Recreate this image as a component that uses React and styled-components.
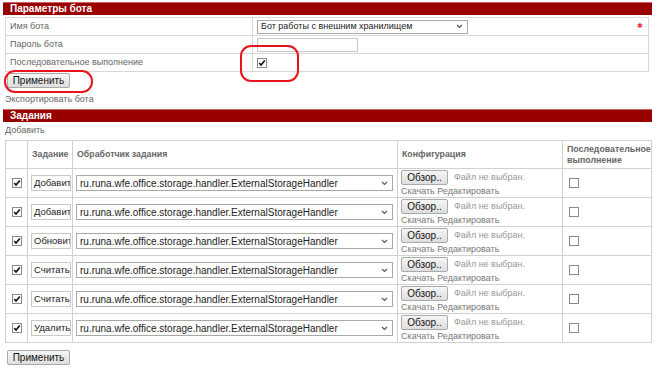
import React from 'react'
import styled, { createGlobalStyle } from 'styled-components'

const Global = createGlobalStyle`
  body {
    margin: 0;
    background: #fff;
    font-family: "Liberation Sans", Arial, sans-serif;
    font-size: 9px;
    color: #666;
  }
`

const Page = styled.div`
  position: relative;
  width: 658px;
  height: 374px;
  padding-top: 2px;
  box-sizing: border-box;
  overflow: hidden;
`

const SectionBar = styled.div`
  margin: ${props => props.top || 0}px 6px 0 3px;
  height: 12px;
  line-height: 12px;
  background: #990000;
  border-top: 1px solid #c86464;
  color: #fff;
  font-weight: bold;
  font-size: 10px;
  padding-left: 7px;
`

const ParamTable = styled.table`
  margin: 2px 0 0 5px;
  width: 644px;
  border-collapse: collapse;
  table-layout: fixed;
  border: 1px solid #d8d8d8;

  tr {
    height: 18px;
  }

  td {
    border-top: 1px solid #d8d8d8;
    padding: 0 0 0 4px;
    vertical-align: middle;
    line-height: 11px;
  }
`

const Col = styled.col`
  width: ${props => props.w}px;
`

const LabelCell = styled.td`
  border-right: 1px solid #d8d8d8;
  color: #666;
`

const ValueCell = styled.td`
  position: relative;
`

const Select = styled.div`
  display: flex;
  align-items: center;
  justify-content: space-between;
  box-sizing: border-box;
  width: ${props => props.w}px;
  height: ${props => props.h || 14}px;
  border: 1px solid #a9a9a9;
  padding: 0 4px 0 3px;
  color: #222;
  font-size: ${props => props.fs || 9}px;
  background: #fff;
  white-space: nowrap;
  overflow: hidden;
`

const Chevron = () => (
  <svg width="7" height="5" viewBox="0 0 7 5">
    <path d="M1 1 L3.5 3.5 L6 1" fill="none" stroke="#555" strokeWidth="1.1" />
  </svg>
)

const TextInput = styled.div`
  box-sizing: border-box;
  width: ${props => props.w}px;
  height: ${props => props.h || 14}px;
  border: 1px solid #c8c8c8;
  padding: 0 1px 0 2px;
  color: #222;
  font-size: ${props => props.fs || 9}px;
  line-height: ${props => (props.h || 14) - 2}px;
  overflow: hidden;
  white-space: nowrap;
`

const Check = styled.span`
  display: inline-flex;
  align-items: center;
  justify-content: center;
  box-sizing: border-box;
  width: 10px;
  height: 10px;
  border: 1px solid #8a8a8a;
  background: #fff;
  vertical-align: middle;
`

const CheckBox = ({ checked }) => (
  <Check>
    {checked && (
      <svg width="8" height="8" viewBox="0 0 8 8">
        <path d="M1.2 4 L3 6 L6.8 1.4" fill="none" stroke="#111" strokeWidth="1.6" />
      </svg>
    )}
  </Check>
)

const Star = styled.span`
  position: absolute;
  right: 5px;
  top: 2px;
  color: #e33;
  font-size: 7px;
`

const Button = styled.div`
  display: inline-flex;
  align-items: center;
  justify-content: center;
  box-sizing: border-box;
  width: ${props => props.w || 63}px;
  height: 15px;
  border: 1px solid #aaa;
  border-radius: 2px;
  background: linear-gradient(#f6f6f6, #dedede);
  color: #111;
  font-size: 10px;
`

const ButtonRow = styled.div`
  margin: ${props => props.top}px 0 0 7px;
  height: 15px;
`

const LinkText = styled.div`
  margin: ${props => props.top}px 0 0 5px;
  color: #666;
  line-height: 11px;
`

const TaskTable = styled.table`
  margin: 4px 0 0 5px;
  width: 647px;
  border-collapse: collapse;
  table-layout: fixed;
  border: 1px solid #d0d0d0;

  thead tr {
    height: 28px;
  }

  tbody tr {
    height: 29px;
  }

  th {
    text-align: left;
    font-weight: bold;
    font-size: 8.8px;
    color: #666;
    padding: 0 3px 0 4px;
    line-height: 11px;
    border: 1px solid #d0d0d0;
  }

  td {
    border: 1px solid #d0d0d0;
    padding: 0 3px;
    vertical-align: middle;
    white-space: nowrap;
  }
`

const CheckCell = styled.td`
  && {
    padding-left: 6px;
  }
`

const Config = styled.div`
  display: flex;
  flex-direction: column;
  gap: 1px;
  color: #777;
  line-height: 11px;
`

const FileLine = styled.div`
  display: flex;
  align-items: center;
  gap: 6px;
  color: #999;
`

const SmallBtn = styled(Button)`
  width: 47px;
  height: 15px;
  font-size: 10px;
`

const Note = styled.div`
  position: absolute;
  left: ${props => props.x}px;
  top: ${props => props.y}px;
  width: ${props => props.w}px;
  height: ${props => props.h}px;
  border: 2px solid #e8141c;
  border-radius: 11px;
  box-sizing: border-box;
`

const tasks = ['Добавит', 'Добавит', 'Обновит', 'Считать', 'Считать', 'Удалить']

export default function App() {
  return (
    <Page>
      <Global />
      <SectionBar>Параметры бота</SectionBar>
      <ParamTable>
        <colgroup>
          <Col w={247} />
          <Col />
        </colgroup>
        <tbody>
          <tr>
            <LabelCell>Имя бота</LabelCell>
            <ValueCell>
              <Select w={211}>Бот работы с внешним хранилищем<Chevron /></Select>
              <Star>✱</Star>
            </ValueCell>
          </tr>
          <tr>
            <LabelCell>Пароль бота</LabelCell>
            <ValueCell><TextInput w={101} /></ValueCell>
          </tr>
          <tr>
            <LabelCell>Последовательное выполнение</LabelCell>
            <ValueCell><CheckBox checked /></ValueCell>
          </tr>
        </tbody>
      </ParamTable>
      <ButtonRow top={1}><Button>Применить</Button></ButtonRow>
      <LinkText top={6}>Экспортировать бота</LinkText>
      <SectionBar top={4}>Задания</SectionBar>
      <LinkText top={3}>Добавить</LinkText>
      <TaskTable>
        <colgroup>
          <Col w={22} />
          <Col w={45} />
          <Col w={325} />
          <Col w={165} />
          <Col />
        </colgroup>
        <thead>
          <tr>
            <th></th>
            <th>Задание</th>
            <th>Обработчик задания</th>
            <th>Конфигурация</th>
            <th>Последовательное выполнение</th>
          </tr>
        </thead>
        <tbody>
          {tasks.map((t, i) => (
            <tr key={i}>
              <CheckCell><CheckBox checked /></CheckCell>
              <td><TextInput w={40} h={16} fs={9.5}>{t}</TextInput></td>
              <td><Select w={317} h={16} fs={10}>ru.runa.wfe.office.storage.handler.ExternalStorageHandler<Chevron /></Select></td>
              <td>
                <Config>
                  <FileLine><SmallBtn>Обзор..</SmallBtn>Файл не выбран.</FileLine>
                  <span>Скачать Редактировать</span>
                </Config>
              </td>
              <CheckCell><CheckBox /></CheckCell>
            </tr>
          ))}
        </tbody>
      </TaskTable>
      <ButtonRow top={7}><Button>Применить</Button></ButtonRow>
      <Note x={4} y={70} w={89} h={23} />
      <Note x={240} y={45} w={59} h={37} />
    </Page>
  )
}
